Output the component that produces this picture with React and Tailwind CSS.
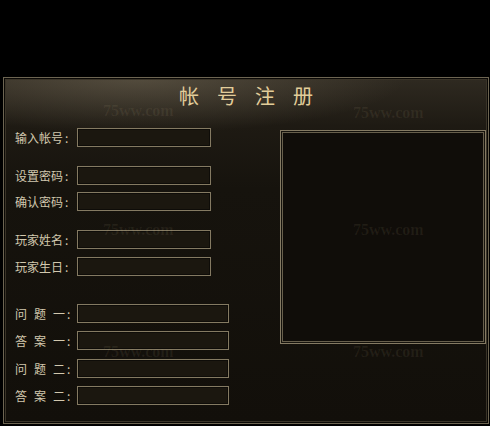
import React from "react";

const font = { fontFamily: '"Noto Sans CJK SC", "Noto Sans", sans-serif' };

function Field({ label, wide }) {
  return (
    <div className="flex items-center h-[19px]">
      <div className="w-[62px] shrink-0 flex items-center text-[12px] leading-none text-[#d2c8ae]">
        {label}
      </div>
      <div
        className={`${wide ? "w-[152px]" : "w-[134px]"} h-[19px] border border-[#847a62] bg-[#1b170f] shadow-[inset_0_0_0_1px_#0e0c08]`}
      />
    </div>
  );
}

function Lbl({ a, b, c }) {
  return (
    <>
      <span className="mr-[7px]">{a}</span>
      <span className="mr-[7px]">{b}</span>
      <span>{c}</span>
      <span className="ml-[2px]">:</span>
    </>
  );
}

function Plain({ t }) {
  return (
    <>
      <span>{t}</span>
      <span className="ml-[2px]">:</span>
    </>
  );
}

function Wm({ className }) {
  return (
    <div
      className={`absolute text-[16px] font-bold leading-none text-[#c8b890]/[0.09] pointer-events-none ${className}`}
      style={{ fontFamily: '"Liberation Serif", serif' }}
    >
      75ww.com
    </div>
  );
}

export default function App() {
  return (
    <div className="w-[490px] h-[426px] bg-black pt-[77px] pl-[3px] overflow-hidden" style={font}>
      <div className="relative w-[486px] h-[347px] border border-[#6d6552] shadow-[inset_0_0_0_1px_#0b0906,inset_0_0_0_2px_#3a3428] bg-[radial-gradient(ellipse_55%_16%_at_28%_0%,rgba(140,128,105,0.4),rgba(0,0,0,0)_100%),linear-gradient(180deg,#2f2a21_0%,#1e1a13_14%,#16130d_32%,#120f0a_100%)]">
        <div className="h-[36px] flex items-center justify-center pl-[18px] text-[20px] leading-none tracking-[18px] text-[#e2cd9a]">
          帐号注册
        </div>

        <div className="flex mt-[14px]">
          <div className="w-[276px] shrink-0 pl-[11px] flex flex-col">
            <Field label={<Plain t="输入帐号" />} />
            <div className="h-[19px]" />
            <Field label={<Plain t="设置密码" />} />
            <div className="h-[7px]" />
            <Field label={<Plain t="确认密码" />} />
            <div className="h-[19px]" />
            <Field label={<Plain t="玩家姓名" />} />
            <div className="h-[8px]" />
            <Field label={<Plain t="玩家生日" />} />
            <div className="h-[28px]" />
            <Field wide label={<Lbl a="问" b="题" c="一" />} />
            <div className="h-[8px]" />
            <Field wide label={<Lbl a="答" b="案" c="一" />} />
            <div className="h-[9px]" />
            <Field wide label={<Lbl a="问" b="题" c="二" />} />
            <div className="h-[8px]" />
            <Field wide label={<Lbl a="答" b="案" c="二" />} />
          </div>
          <div className="mt-[2px] w-[206px] h-[214px] border border-[#847a63] bg-[#100d09] shadow-[inset_0_0_0_1px_#15120c,inset_0_0_0_2px_#675f4c]" />
        </div>

        <Wm className="left-[99px] top-[25px]" />
        <Wm className="left-[349px] top-[27px]" />
        <Wm className="left-[99px] top-[144px]" />
        <Wm className="left-[349px] top-[144px]" />
        <Wm className="left-[99px] top-[266px]" />
        <Wm className="left-[349px] top-[266px]" />
      </div>
    </div>
  );
}
